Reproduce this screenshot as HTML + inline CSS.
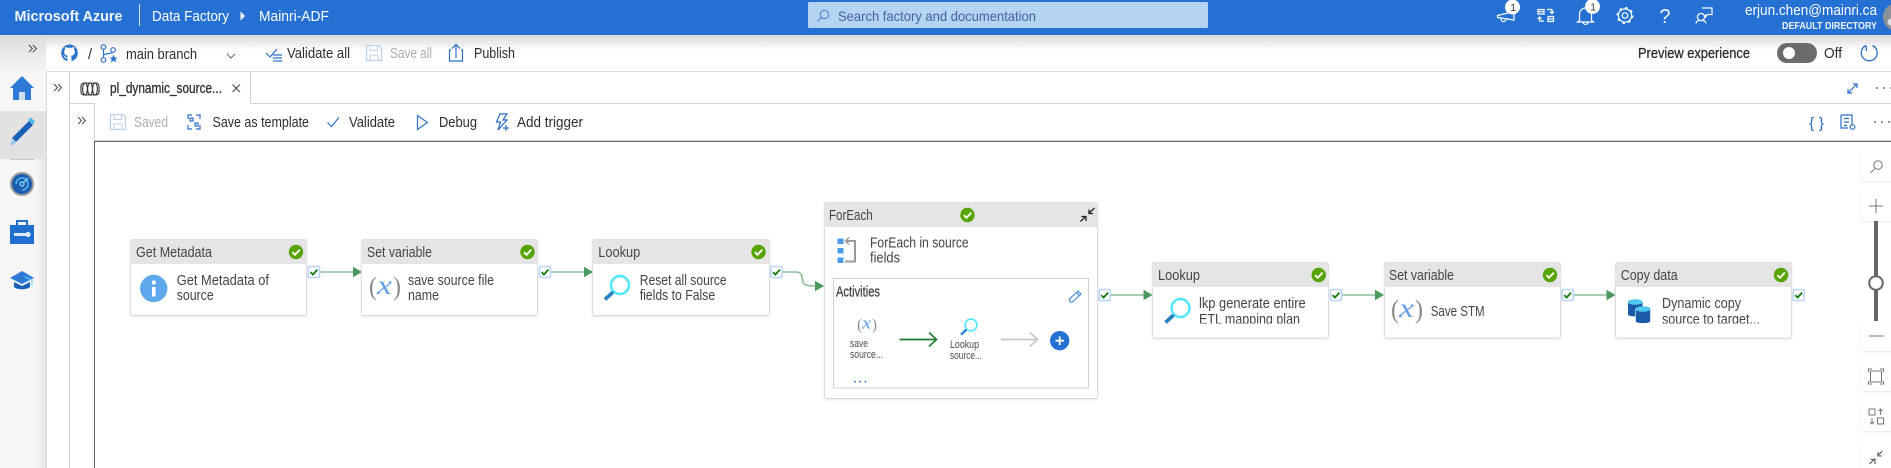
<!DOCTYPE html>
<html><head><meta charset="utf-8"><title>Data Factory</title>
<style>
html,body{margin:0;padding:0;background:#fff;overflow:hidden}
svg{display:block}
text{font-family:"Liberation Sans",sans-serif;white-space:pre}
.n{font-size:14.5px;fill:#454545}
.h{font-size:15px;fill:#454545}
.w{fill:#fff;font-size:14.5px}
.b{font-size:14.5px;fill:#2d2d2d}
.g{font-size:14.5px;fill:#adadad}
.s{font-size:11px;fill:#4a4a4a}
.m{stroke:#222;stroke-width:.25px}
.ic{fill:none;stroke:#2b6fc9;stroke-width:1.2}
.wi{fill:none;stroke:#fff;stroke-width:1.2}
.gi{fill:none;stroke:#777;stroke-width:1}
</style></head><body>
<svg width="1891" height="468" viewBox="0 0 1891 468" xmlns="http://www.w3.org/2000/svg">
<defs>
<linearGradient id="tg" x1="0" y1="0" x2="0" y2="1"><stop offset="0" stop-color="#d9d9d9"/><stop offset=".7" stop-color="#fff"/></linearGradient>
<linearGradient id="sg" x1="0" y1="0" x2="0" y2="1"><stop offset="0" stop-color="#dcdcdc"/><stop offset=".5" stop-color="#f6f6f6"/></linearGradient>
<linearGradient id="sr" x1="0" y1="0" x2="1" y2="0"><stop offset="0" stop-color="#f7f7f7"/><stop offset=".8" stop-color="#f5f5f5"/><stop offset="1" stop-color="#e4e4e4"/></linearGradient>
<filter id="sh" x="-30%" y="-30%" width="160%" height="160%"><feDropShadow dx="0" dy="1" stdDeviation="1" flood-color="#000" flood-opacity=".09"/></filter>
<g id="ok"><circle r="7.2" fill="#57a300"/><path d="M-3.6 .2L-1 2.8L3.8-2.4" fill="none" stroke="#fff" stroke-width="1.9"/></g>
<g id="ck"><rect x="-5.5" y="-5.5" width="11" height="11" rx="1" fill="#fff" stroke="#b9d5f7" stroke-width="1.6"/><path d="M-3.4 .1L-1.1 2.5L3.4-2.4" fill="none" stroke="#107c10" stroke-width="1.8"/></g>
<g id="hd"><path d="M0-5.2L9 0L0 5.2Z" fill="#4c9a5c"/></g>
<g id="lk"><circle cx="3" cy="-3" r="9" fill="none" stroke="#50e6ff" stroke-width="2.4"/><path d="M-4 4L-12 11.5" stroke="#2a83c0" stroke-width="3.6"/></g>
<g id="vx"><text x="-16" y="7" style="font-family:'Liberation Serif',serif;font-size:26px;fill:#8a8a8a" textLength="8" lengthAdjust="spacingAndGlyphs">(</text><text x="-8" y="6" style="font-family:'Liberation Serif',serif;font-size:27px;font-style:italic;fill:#639fe6" textLength="15" lengthAdjust="spacingAndGlyphs">x</text><text x="8" y="7" style="font-family:'Liberation Serif',serif;font-size:26px;fill:#8a8a8a" textLength="8" lengthAdjust="spacingAndGlyphs">)</text></g>
<g id="ch"><path d="M0 0L3.4 3.6L0 7.2M4 0L7.4 3.6L4 7.2" fill="none" stroke="#444" stroke-width="1"/></g>
<g id="sv"><path d="M-6.5-7.5H5L7.5-5V7.5H-7.5V-7.5Z" fill="#fff" stroke="#bcd2ea" stroke-width="1.3"/><path d="M-4-7.5V-2.5H3.5V-7.5M-4 7.5V2H4V7.5" fill="none" stroke="#bcd2ea" stroke-width="1.1"/></g>
</defs>

<rect width="1891" height="468" fill="#fff"/>

<!-- top bar -->
<rect width="1891" height="35" fill="#2470d3"/>
<text x="14.5" y="21" style="font-size:15px;font-weight:bold;fill:#f2f6fc" textLength="108" lengthAdjust="spacingAndGlyphs">Microsoft Azure</text>
<rect x="139" y="4" width="1" height="22" fill="#d5e3f6"/>
<text x="152" y="21" class="w" textLength="77" lengthAdjust="spacingAndGlyphs">Data Factory</text>
<path d="M240.5 11.5L245 16L240.5 20.5Z" fill="#fff"/>
<text x="259" y="21" class="w" textLength="70" lengthAdjust="spacingAndGlyphs">Mainri-ADF</text>
<rect x="808" y="2" width="400" height="26" rx="1.5" fill="#b5d4f1"/>
<circle cx="824.5" cy="14.5" r="4.2" fill="none" stroke="#5f7fd6" stroke-width="1.1"/><path d="M821.5 17.5L817.5 21.5" stroke="#5f7fd6" stroke-width="1.2"/>
<text x="838" y="21" style="font-size:14px;fill:#3f63a3" textLength="198" lengthAdjust="spacingAndGlyphs">Search factory and documentation</text>

<!-- header icons -->
<path class="wi" d="M1497.5 15.5L1514 11.5V20L1497.5 17.5ZM1501 18.5A2.5 2.5 0 0 0 1506 19.5" />
<circle cx="1512.5" cy="7" r="7.5" fill="#fff"/><text x="1510.3" y="11" style="font-size:10.5px;fill:#333">1</text>
<path class="wi" d="M1538 9.5H1544V14H1538ZM1538 11.7H1544M1548 16.5H1553.5V21.5H1548ZM1548 19H1553.5M1547 9.5H1552V13M1550 11.5L1552 13.5L1554 11.5M1544 21H1539.5V17.5M1537.5 19L1539.5 17L1541.5 19"/>
<path class="wi" d="M1579.5 20.5V14A6 6 0 0 1 1591.5 14V20.5L1593.5 22H1577.5ZM1583 22.5A2.6 2.6 0 0 0 1588 22.5"/>
<circle cx="1592.5" cy="6.5" r="7.5" fill="#fff"/><text x="1590.3" y="10.5" style="font-size:10.5px;fill:#333">1</text>
<circle cx="1625" cy="15.5" r="2.8" class="wi"/><circle cx="1625" cy="15.5" r="6.6" fill="none" stroke="#fff" stroke-width="1.2"/><circle cx="1625" cy="15.5" r="7.7" fill="none" stroke="#fff" stroke-width="1.6" stroke-dasharray="2.4 3.64"/>
<text x="1659.5" y="23" style="font-size:20px;fill:#f2f6fc" textLength="11" lengthAdjust="spacingAndGlyphs">?</text>
<circle cx="1701" cy="17" r="3.6" class="wi"/><path class="wi" d="M1696 23.5C1696.3 20.5 1698.5 20.5 1701 20.5S1705.7 20.5 1706 23.5M1702 8H1712V14.5H1707.5L1705.5 17V14.5"/>
<text x="1745" y="15" class="w" textLength="132" lengthAdjust="spacingAndGlyphs">erjun.chen@mainri.ca</text>
<text x="1782" y="29" style="font-size:10px;font-weight:bold;fill:#eef4fc" textLength="95" lengthAdjust="spacingAndGlyphs">DEFAULT DIRECTORY</text>
<circle cx="1897" cy="17" r="14" fill="#8c9198"/><circle cx="1891" cy="22" r="3.5" fill="#ddd"/>

<!-- toolbar -->
<rect x="0" y="35" width="1891" height="22" fill="url(#tg)"/>
<rect x="46" y="71" width="1845" height="1" fill="#dedede"/>

<!-- sidebar -->
<rect x="0" y="35" width="46" height="433" fill="url(#sr)"/>
<rect x="0" y="35" width="46" height="76" fill="url(#sg)"/>
<rect x="0" y="111" width="46" height="48" fill="#e2e2e2"/>
<rect x="10" y="159" width="24" height="1" fill="#c8c8c8"/>
<rect x="46" y="72" width="1" height="396" fill="#d8d8d8"/>
<use href="#ch" x="29" y="45"/>
<path d="M22 76L34 88H31V100H25V93H19V100H13V88H10Z" fill="#2f7ad6"/><rect x="19" y="92" width="6" height="8" fill="#cfe0f5"/>
<path d="M12 138L29 121L33 125L16 142Z" fill="#1b5fb8"/><path d="M28 120L31 117.5L35 121.5L33 124.5Z" fill="#50b8ea"/><path d="M12 139L16 143L10 146Z" fill="#9dc3ee"/>
<circle cx="22" cy="184" r="12" fill="#9a9a9a"/><circle cx="22" cy="184" r="10" fill="#1d5cb0"/><path d="M16 184A6 6 0 1 1 22 190" fill="none" stroke="#50b8ea" stroke-width="1.6"/><circle cx="22" cy="184" r="2" fill="none" stroke="#7fd3f5" stroke-width="1.4"/><path d="M23 183L28 178" stroke="#7fd3f5" stroke-width="1.4"/>
<path d="M17 225V221H27V225" fill="none" stroke="#1f6fd0" stroke-width="2"/><rect x="10" y="225" width="24" height="19" fill="#1f6fd0"/><rect x="14" y="233" width="13" height="3" fill="#dfe9f5"/><circle cx="28" cy="234.5" r="2.6" fill="#dfe9f5"/>
<path d="M22 271L34 278L22 284L10 278Z" fill="#2f7ad6"/><path d="M14 282V287C17 290 27 290 30 287V282L22 286Z" fill="#1b5fb8"/><path d="M25 277L32 280V286" fill="none" stroke="#7fd3f5" stroke-width="1.2"/>

<!-- toolbar content -->
<path d="M69.5 44.5A8.5 8.5 0 0 0 66.8 61C67.3 61.1 67.4 60.8 67.4 60.6V58.2C65 58.7 64.5 57.2 64.5 57.2C64.1 56.2 63.5 55.9 63.5 55.9C62.7 55.4 63.6 55.4 63.6 55.4C64.5 55.5 64.9 56.3 64.9 56.3C65.7 57.7 67 57.3 67.5 57C67.6 56.4 67.8 56 68.1 55.8C66.2 55.6 64.2 54.9 64.2 51.6C64.2 50.7 64.5 49.9 65.1 49.3C65 49.1 64.7 48.2 65.2 47C65.2 47 65.9 46.8 67.5 47.9C68.9 47.5 70.1 47.5 71.5 47.9C73.1 46.8 73.8 47 73.8 47C74.3 48.2 74 49.1 73.9 49.3C74.5 49.9 74.8 50.7 74.8 51.6C74.8 54.9 72.8 55.6 70.9 55.8C71.2 56.1 71.5 56.6 71.5 57.4V60.6C71.5 60.8 71.6 61.1 72.2 61A8.5 8.5 0 0 0 69.5 44.5Z" fill="#2b72cf"/>
<text x="88" y="59" class="b">/</text>
<g fill="none" stroke="#2b6fc9" stroke-width="1.2"><circle cx="103.5" cy="47" r="2.3"/><circle cx="103.5" cy="60" r="2.3"/><circle cx="113" cy="50" r="2.3"/><path d="M103.5 49.5V57.5M104 55C106 53 111 54 112.5 52.5"/></g><path d="M113.5 54.5L114.7 57.5L117.5 57.7L115.3 59.5L116.2 62.3L113.5 60.7L110.8 62.3L111.7 59.5L109.5 57.7L112.3 57.5Z" fill="#2b6fc9"/>
<text x="126" y="59" class="b" textLength="71" lengthAdjust="spacingAndGlyphs">main branch</text>
<path d="M227 54L231 58L235 54" fill="none" stroke="#666" stroke-width="1"/>
<path class="ic" d="M266 53L270 57L277 49M273 55H282M273 58H282M273 61H282" stroke-width="1"/>
<text x="287" y="58" class="b" textLength="63" lengthAdjust="spacingAndGlyphs">Validate all</text>
<g transform="translate(374 53)"><use href="#sv"/></g>
<text x="390" y="58" class="g" textLength="42" lengthAdjust="spacingAndGlyphs">Save all</text>
<path class="ic" d="M456 58V45M452 48.5L456 44.5L460 48.5M451 50H449.5V61H462.5V50H461"/>
<text x="474" y="58" class="b" textLength="41" lengthAdjust="spacingAndGlyphs">Publish</text>
<text x="1638" y="58" class="b m" textLength="112" lengthAdjust="spacingAndGlyphs">Preview experience</text>
<rect x="1777" y="43" width="40" height="20" rx="10" fill="#6b6b6b"/><circle cx="1789" cy="53" r="6" fill="#fff"/>
<text x="1824" y="58" class="b" textLength="18" lengthAdjust="spacingAndGlyphs">Off</text>
<path d="M1866 45.5A8 8 0 1 0 1872.5 45.5M1866 45.5L1866.5 51" fill="none" stroke="#2b6fc9" stroke-width="1.3"/>

<!-- tab row -->
<rect x="250" y="103" width="1641" height="1" fill="#d3d3d3"/>
<rect x="250" y="72" width="1" height="32" fill="#d3d3d3"/>
<rect x="69" y="103" width="26" height="1" fill="#d3d3d3"/>
<rect x="69" y="72" width="1" height="396" fill="#cfcfcf"/>
<use href="#ch" x="54" y="84"/>
<g fill="none" stroke="#333" stroke-width="1.1"><rect x="81" y="83" width="18" height="12" rx="3"/><ellipse cx="85" cy="89" rx="2.4" ry="6"/><ellipse cx="90" cy="89" rx="2.4" ry="6"/><ellipse cx="95" cy="89" rx="2.4" ry="6"/></g>
<text x="110" y="93" class="b m" textLength="112" lengthAdjust="spacingAndGlyphs">pl_dynamic_source...</text>
<path d="M232.5 84.5L240 92M240 84.5L232.5 92" stroke="#444" stroke-width="1" fill="none"/>
<path class="ic" d="M1848 93L1857 84M1853 84H1857V88M1848 89V93H1852" stroke-width="1"/>
<circle cx="1877" cy="88" r=".9" fill="#444"/><circle cx="1884" cy="88" r=".9" fill="#444"/><circle cx="1891" cy="88" r=".9" fill="#444"/>

<!-- command row -->
<rect x="94" y="104" width="1" height="364" fill="#d3d3d3"/>
<use href="#ch" x="78" y="117"/>
<g transform="translate(118 122)"><use href="#sv"/></g>
<text x="134" y="127" class="g" textLength="34" lengthAdjust="spacingAndGlyphs">Saved</text>
<path class="ic" d="M188 119V115H192M196 115H200V119M188 125V129H192M196 129H200V125" stroke-width="1"/><rect x="190" y="118" width="3" height="3" class="ic" stroke-width="1"/><rect x="195" y="123" width="3" height="3" class="ic" stroke-width="1"/>
<text x="212.5" y="127" class="b" textLength="96.5" lengthAdjust="spacingAndGlyphs">Save as template</text>
<path class="ic" d="M327.5 122.5L331.5 126.5L339 117.5" stroke-width="1"/>
<text x="349" y="127" class="b" textLength="46" lengthAdjust="spacingAndGlyphs">Validate</text>
<path class="ic" d="M417.5 115.5L427.5 122.5L417.5 129.5Z"/>
<text x="439" y="127" class="b" textLength="38" lengthAdjust="spacingAndGlyphs">Debug</text>
<path class="ic" d="M500 114H507L503 120H507L498 130L500.5 122H496.5ZM503 128H509M506 125V131" stroke-width="1"/>
<text x="517" y="127" class="b" textLength="66" lengthAdjust="spacingAndGlyphs">Add trigger</text>
<text x="1809" y="128" style="font-size:15px;fill:#2b6fc9" textLength="15" lengthAdjust="spacingAndGlyphs">{ }</text>
<path class="ic" d="M1841 115H1852V125M1841 115V128H1848M1844 118.500H1849M1844 122H1849M1844 125.500H1847" stroke-width="1"/><circle cx="1852.500" cy="127" r="2.300" class="ic"/>
<circle cx="1875" cy="122" r=".9" fill="#444"/><circle cx="1882" cy="122" r=".9" fill="#444"/><circle cx="1889" cy="122" r=".9" fill="#444"/>

<!-- canvas border -->
<rect x="94" y="140" width="1797" height="1" fill="#d0d0d0"/>
<rect x="94" y="141" width="1797" height="1" fill="#6b6b6b"/>
<rect x="94" y="141" width="1" height="327" fill="#5f5f5f"/>

<!-- connectors -->
<g stroke="#8cbd98" stroke-width="1.6" fill="none">
<path d="M320 272H353"/><path d="M551 272H584"/>
<path d="M782 272H796C802 272 802 276 802.500 280C803 285 806 286 816 286"/>
<path d="M1111 295H1144"/><path d="M1342 295H1375"/><path d="M1574 295H1607"/>
</g>
<use href="#hd" x="353" y="272"/><use href="#hd" x="584" y="272"/><use href="#hd" x="815" y="286"/><use href="#hd" x="1143.500" y="295"/><use href="#hd" x="1375" y="295"/><use href="#hd" x="1606.500" y="295"/>

<!-- Get Metadata -->
<g>
<rect x="130.500" y="239.500" width="176" height="76" rx="2" fill="#fff" stroke="#dcdcdc" filter="url(#sh)"/>
<path d="M130 264V241.500A2 2 0 0 1 132 239.500H305A2 2 0 0 1 307 241.500V264Z" fill="#e5e5e5"/>
<text x="136" y="257" class="h" textLength="76" lengthAdjust="spacingAndGlyphs">Get Metadata</text>
<use href="#ok" x="296" y="252"/><use href="#ck" x="314" y="272"/>
<circle cx="153.700" cy="288.500" r="13.700" fill="#5ea9ee"/><rect x="152" y="287" width="3.600" height="9.500" fill="#fff"/><circle cx="153.800" cy="282.500" r="2.100" fill="#fff"/>
<text x="176.700" y="285" class="n" textLength="92.300" lengthAdjust="spacingAndGlyphs">Get Metadata of</text>
<text x="176.700" y="300" class="n" textLength="37" lengthAdjust="spacingAndGlyphs">source</text>
</g>

<!-- Set variable -->
<g>
<rect x="361.500" y="239.500" width="176" height="76" rx="2" fill="#fff" stroke="#dcdcdc" filter="url(#sh)"/>
<path d="M361 264V241.500A2 2 0 0 1 363 239.500H536A2 2 0 0 1 538 241.500V264Z" fill="#e5e5e5"/>
<text x="367" y="257" class="h" textLength="65" lengthAdjust="spacingAndGlyphs">Set variable</text>
<use href="#ok" x="527.500" y="252"/><use href="#ck" x="545" y="272"/>
<use href="#vx" x="385" y="288"/>
<text x="408" y="285" class="n" textLength="86" lengthAdjust="spacingAndGlyphs">save source file</text>
<text x="408" y="300" class="n" textLength="31" lengthAdjust="spacingAndGlyphs">name</text>
</g>

<!-- Lookup -->
<g>
<rect x="592.500" y="239.500" width="177" height="76" rx="2" fill="#fff" stroke="#dcdcdc" filter="url(#sh)"/>
<path d="M592 264V241.500A2 2 0 0 1 594 239.500H768A2 2 0 0 1 770 241.500V264Z" fill="#e5e5e5"/>
<text x="598.300" y="257" class="h" textLength="42" lengthAdjust="spacingAndGlyphs">Lookup</text>
<use href="#ok" x="758.500" y="252"/><use href="#ck" x="776.500" y="272"/>
<use href="#lk" x="617" y="288"/>
<text x="639.700" y="285" class="n" textLength="87" lengthAdjust="spacingAndGlyphs">Reset all source</text>
<text x="639.700" y="300" class="n" textLength="75.500" lengthAdjust="spacingAndGlyphs">fields to False</text>
</g>

<!-- ForEach -->
<g>
<rect x="824.500" y="202.500" width="273" height="196" rx="2" fill="#fff" stroke="#dcdcdc" filter="url(#sh)"/>
<path d="M824 227V204.500A2 2 0 0 1 826 202.500H1096A2 2 0 0 1 1098 204.500V227Z" fill="#e5e5e5"/>
<text x="829" y="220" class="h" textLength="43.700" lengthAdjust="spacingAndGlyphs">ForEach</text>
<use href="#ok" x="967.500" y="215"/>
<path d="M1080.500 221.500L1086 216M1081.500 216.500H1086V221M1088.500 213.500L1094.500 208M1089 209.500V213.500H1093" fill="none" stroke="#222" stroke-width="1.300"/>
<rect x="837.500" y="238.500" width="6" height="5.500" fill="#4a9bea"/><rect x="837.500" y="248" width="6" height="5.500" fill="#4a9bea"/><rect x="837.500" y="257.500" width="6" height="5.500" fill="#4a9bea"/>
<path d="M846 241H855V261.500H845" fill="none" stroke="#9a9a9a" stroke-width="2"/><path d="M849 237.500L845.500 241L849 244.500" fill="none" stroke="#9a9a9a" stroke-width="1.500"/>
<text x="870" y="247.500" class="n" textLength="98.700" lengthAdjust="spacingAndGlyphs">ForEach in source</text>
<text x="870" y="262.500" class="n" textLength="30" lengthAdjust="spacingAndGlyphs">fields</text>
<rect x="833.500" y="278.500" width="255" height="109.500" fill="#fff" stroke="#d0d0d0"/>
<text x="836" y="296.500" class="n m" style="stroke:#333" textLength="44" lengthAdjust="spacingAndGlyphs">Activities</text>
<path d="M1070 302L1069.500 299L1078 291L1081 294L1072.500 302ZM1076.500 292.500L1079.500 295.500" fill="none" stroke="#3a86dd" stroke-width="1.100"/>
<g transform="translate(867 325) scale(.62)"><use href="#vx"/></g>
<text x="850" y="347" class="s" textLength="18" lengthAdjust="spacingAndGlyphs">save</text>
<text x="850" y="358" class="s" textLength="33" lengthAdjust="spacingAndGlyphs">source...</text>
<path d="M899.500 339.500H936M929 332.500L936.500 339.500L929 346.500" fill="none" stroke="#1f7d2e" stroke-width="1.700"/>
<g transform="translate(969 327) scale(.66)"><use href="#lk"/></g>
<text x="950" y="348" class="s" textLength="29" lengthAdjust="spacingAndGlyphs">Lookup</text>
<text x="950" y="359" class="s" textLength="32" lengthAdjust="spacingAndGlyphs">source...</text>
<path d="M1001 339.500H1037M1030 332.500L1037.500 339.500L1030 346.500" fill="none" stroke="#c8c8c8" stroke-width="1.700"/>
<circle cx="1059.700" cy="340.700" r="9.700" fill="#2470d3"/><path d="M1055.500 340.700H1064M1059.700 336.500V345" stroke="#fff" stroke-width="1.800"/>
<circle cx="855" cy="381.700" r=".9" fill="#2470d3"/><circle cx="860" cy="381.700" r=".9" fill="#2470d3"/><circle cx="865.500" cy="381.700" r=".9" fill="#2470d3"/>
<use href="#ck" x="1104.700" y="295"/>
</g>

<!-- Lookup 2 -->
<g>
<rect x="1152.500" y="262.500" width="176" height="75.500" rx="2" fill="#fff" stroke="#dcdcdc" filter="url(#sh)"/>
<path d="M1152 287V264.500A2 2 0 0 1 1154 262.500H1327A2 2 0 0 1 1329 264.500V287Z" fill="#e5e5e5"/>
<text x="1158" y="280" class="h" textLength="42" lengthAdjust="spacingAndGlyphs">Lookup</text>
<use href="#ok" x="1318.700" y="275"/><use href="#ck" x="1336" y="295"/>
<use href="#lk" x="1177.500" y="311"/>
<text x="1199" y="308" class="n" textLength="106.700" lengthAdjust="spacingAndGlyphs">lkp generate entire</text>
<text x="1199" y="324" class="n" textLength="101" lengthAdjust="spacingAndGlyphs">ETL mapping plan</text>
<rect x="1197" y="323.500" width="110" height="6" fill="#fff"/>
</g>

<!-- Set variable 2 -->
<g>
<rect x="1384.500" y="262.500" width="176" height="75.500" rx="2" fill="#fff" stroke="#dcdcdc" filter="url(#sh)"/>
<path d="M1384 287V264.500A2 2 0 0 1 1386 262.500H1559A2 2 0 0 1 1561 264.500V287Z" fill="#e5e5e5"/>
<text x="1389" y="280" class="h" textLength="65" lengthAdjust="spacingAndGlyphs">Set variable</text>
<use href="#ok" x="1550" y="275"/><use href="#ck" x="1567.700" y="295"/>
<use href="#vx" x="1407" y="311"/>
<text x="1430.700" y="316" class="n" textLength="54" lengthAdjust="spacingAndGlyphs">Save STM</text>
</g>

<!-- Copy data -->
<g>
<rect x="1615.500" y="262.500" width="176" height="75.500" rx="2" fill="#fff" stroke="#dcdcdc" filter="url(#sh)"/>
<path d="M1615 287V264.500A2 2 0 0 1 1617 262.500H1790A2 2 0 0 1 1792 264.500V287Z" fill="#e5e5e5"/>
<text x="1620.700" y="280" class="h" textLength="57" lengthAdjust="spacingAndGlyphs">Copy data</text>
<use href="#ok" x="1781" y="275"/><use href="#ck" x="1798.700" y="295"/>
<path d="M1628 302V314.500C1628 317 1642.500 317 1642.500 314.500V302Z" fill="#1a5aa6"/><ellipse cx="1635.200" cy="302" rx="7.300" ry="2.800" fill="#50c8ee"/>
<path d="M1635.500 309V321.500C1635.500 324 1650.500 324 1650.500 321.500V309Z" fill="#1a5aa6" stroke="#fff" stroke-width=".6"/><ellipse cx="1643" cy="309" rx="7.500" ry="2.800" fill="#50c8ee"/>
<text x="1662" y="308" class="n" textLength="79" lengthAdjust="spacingAndGlyphs">Dynamic copy</text>
<text x="1662" y="324" class="n" textLength="98" lengthAdjust="spacingAndGlyphs">source to target...</text>
<rect x="1660" y="323.500" width="110" height="6" fill="#fff"/>
</g>

<!-- right rail -->
<g fill="#fff" filter="url(#sh)">
<rect x="1861" y="151" width="32" height="30"/>
<rect x="1861" y="191" width="32" height="30"/>
<rect x="1861" y="321" width="32" height="30"/>
<rect x="1861" y="361" width="32" height="30"/>
<rect x="1861" y="401" width="32" height="30"/>
<rect x="1861" y="441" width="32" height="30"/>
</g>
<circle cx="1878" cy="165" r="4.200" class="gi"/><path class="gi" d="M1875 168.500L1870.500 173"/>
<path class="gi" d="M1869 206H1883M1876 199V213"/>
<rect x="1874" y="221" width="4" height="100" fill="#666"/>
<circle cx="1876" cy="283" r="6.800" fill="#fff" stroke="#666" stroke-width="2"/>
<path class="gi" d="M1869 336H1884"/>
<rect x="1870.500" y="371" width="11" height="11" class="gi"/><path class="gi" d="M1868.500 372V369H1872M1880 369H1883.500V372M1868.500 381V384H1872M1880 384H1883.500V381"/>
<rect x="1869" y="409" width="6" height="6" class="gi"/><rect x="1877.500" y="418" width="6" height="6" class="gi"/><path class="gi" d="M1880.500 415V409M1878.500 411L1880.500 409L1882.500 411M1872 418V424M1870 422L1872 424L1874 422"/>
<path d="M1869.500 464L1875 458.500M1870.500 459.500H1875V464M1877.500 456L1882.500 451M1878 452V456H1882" fill="none" stroke="#555" stroke-width="1.100"/>
</svg>
</body></html>
